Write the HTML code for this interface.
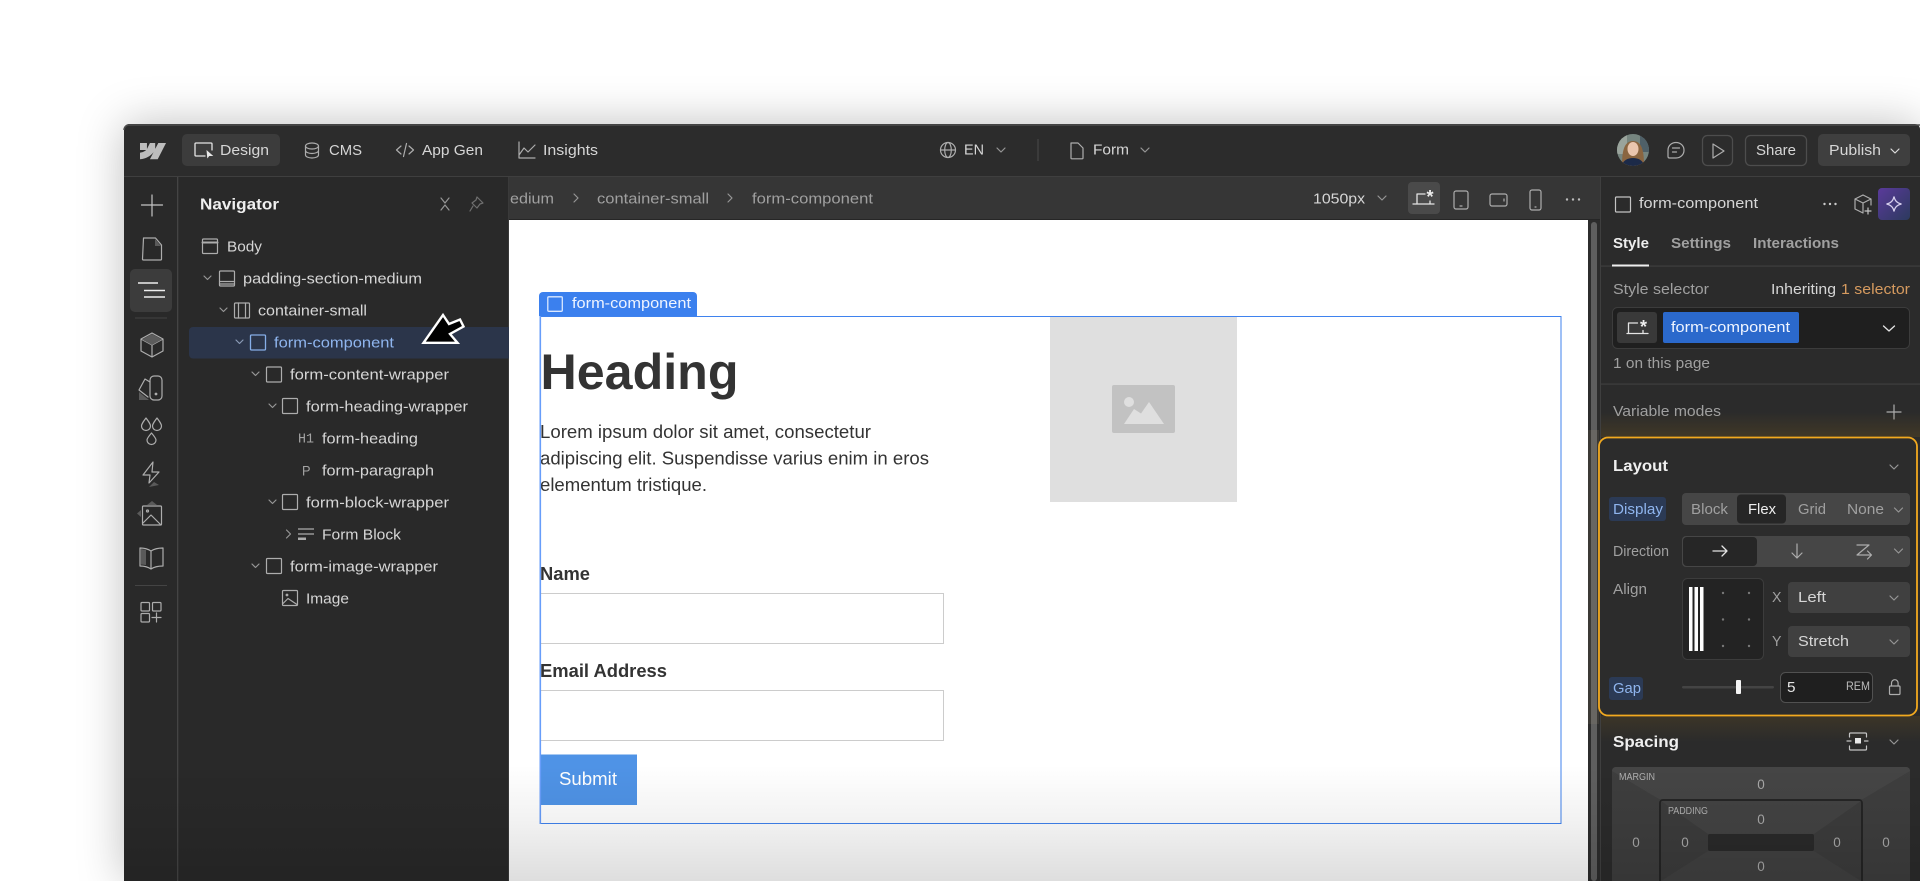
<!DOCTYPE html>
<html><head><meta charset="utf-8"><title>Navigator</title>
<style>
html,body{margin:0;padding:0;background:#fff;width:1920px;height:881px;overflow:hidden}
#wrap{position:relative;width:1920px;height:881px;overflow:hidden;background:#fff}
#sh{position:absolute;left:124px;top:124px;width:1796px;height:757px;border-radius:5px 0 0 0;box-shadow:0 0 46px rgba(0,0,0,.26)}
svg{position:absolute;left:0;top:0;display:block}
text{font-family:"Liberation Sans",sans-serif;font-size:15px;fill:#d6d6d6;transform:translateY(-.8px)}
.b{font-weight:700}
.g{fill:#a0a0a0}
.c{fill:#333;transform:none}
.n{transform:translateY(-.3px)}
.i{fill:none;stroke:#adadad;stroke-width:1.2;stroke-linejoin:round;stroke-linecap:round}
.w{fill:none;stroke:#e4e4e4;stroke-width:1.3;stroke-linecap:round;stroke-linejoin:round}
.ch{fill:none;stroke:#969696;stroke-width:1.2;stroke-linecap:round;stroke-linejoin:round}
.z{font-size:13.5px;fill:#a8a8a8;text-anchor:middle}
</style></head>
<body>
<div id="wrap">
<div id="sh"></div>
<svg width="1920" height="881" viewBox="0 0 1920 881" xmlns="http://www.w3.org/2000/svg">
<defs>
<linearGradient id="fade" x1="0" y1="0" x2="0" y2="1"><stop offset="0" stop-color="#000" stop-opacity="0"/><stop offset=".5" stop-color="#000" stop-opacity=".055"/><stop offset="1" stop-color="#000" stop-opacity=".13"/></linearGradient>
<linearGradient id="ai" x1="0" y1="0" x2="1" y2="1"><stop offset="0" stop-color="#5a3a9a"/><stop offset="1" stop-color="#2c3a5e"/></linearGradient>
<linearGradient id="glowbg" x1="0" y1="0" x2="0" y2="1"><stop offset="0" stop-color="#b07a10" stop-opacity="0"/><stop offset="1" stop-color="#b07a10" stop-opacity=".16"/></linearGradient>
<linearGradient id="glowbg2" x1="0" y1="0" x2="0" y2="1"><stop offset="0" stop-color="#b07a10" stop-opacity=".13"/><stop offset="1" stop-color="#b07a10" stop-opacity="0"/></linearGradient>
<clipPath id="av"><circle cx="1633" cy="150" r="16"/></clipPath>
</defs>

<!-- window -->
<rect x="124" y="124" width="1796" height="800" rx="5" fill="#2c2c2c"/>
<path d="M124 130a5 5 0 0 1 5-5H1920" fill="none" stroke="#4c4c4c" stroke-width="1.5"/>
<rect x="124" y="176" width="1796" height="1.5" fill="#3f3f3f"/>
<rect x="124" y="177" width="385" height="704" fill="#292929"/>
<rect x="177" y="177" width="1.3" height="704" fill="#444"/>
<rect x="508" y="177" width="1.2" height="704" fill="#3a3a3a"/>

<!-- top bar -->
<path transform="translate(140 143) scale(.0241)" fill="#bdbdbd" d="M1080 0 735.2 675H411.3l144.3-279.7h-6.5C430.1 550 252.4 651.5 0 675V399.2s161.5-9.5 256.4-109.4H0V.1h288.2v237h6.5L412.500.1h218v235.5h6.5L759.2 0H1080z"/>
<rect x="182" y="134" width="98" height="32" rx="5" fill="#3c3c3c"/>
<path class="w" d="M205 156h-9a1 1 0 0 1-1-1v-11a1 1 0 0 1 1-1h15a1 1 0 0 1 1 1v6"/><path d="M206.500 150l.8 8.500 2-2.500 4 0z" fill="#e8e8e8"/>
<text x="220" y="156" textLength="49" lengthAdjust="spacingAndGlyphs">Design</text>
<g class="i"><ellipse cx="312" cy="146" rx="6.500" ry="3"/><path d="M305.500 146v9c0 1.700 3 3 6.500 3s6.500-1.300 6.500-3v-9M305.500 150.500c0 1.700 3 3 6.500 3s6.500-1.300 6.500-3"/></g>
<text x="329" y="156" textLength="33" lengthAdjust="spacingAndGlyphs">CMS</text>
<g class="i"><path d="M401 146l-4.500 4 4.500 4M409 146l4.500 4-4.500 4M406.500 143.500l-3 13"/></g>
<text x="422" y="156" textLength="61" lengthAdjust="spacingAndGlyphs">App Gen</text>
<g class="i"><path d="M519 142v16h16M519 155l5-7 4 4 7-7"/></g>
<text x="543" y="156" textLength="55" lengthAdjust="spacingAndGlyphs">Insights</text>

<g class="i"><circle cx="948" cy="150" r="7.500"/><ellipse cx="948" cy="150" rx="3.300" ry="7.500"/><path d="M940.500 150h15"/></g>
<text x="964" y="155.500" textLength="20" lengthAdjust="spacingAndGlyphs">EN</text>
<path class="ch" d="M997 148l4 4 4-4"/>
<rect x="1037.500" y="139" width="1" height="22" fill="#4a4a4a"/>
<path class="i" d="M1071 143h7l5 5v10a.8.8 0 0 1-.8.800H1071.800a.8.8 0 0 1-.8-.8z"/>
<text x="1093" y="155.500" textLength="36" lengthAdjust="spacingAndGlyphs">Form</text>
<path class="ch" d="M1141 148l4 4 4-4"/>

<!-- breadcrumb bar -->
<rect x="509" y="177" width="1092" height="43" fill="#363636"/>
<rect x="509" y="219" width="1092" height="1" fill="#262626"/>
<text class="g n" x="510" y="204" textLength="44" lengthAdjust="spacingAndGlyphs">edium</text>
<path class="ch" d="M574 194l4 4-4 4"/>
<text class="g n" x="597" y="204" textLength="112" lengthAdjust="spacingAndGlyphs">container-small</text>
<path class="ch" d="M728 194l4 4-4 4"/>
<text class="g n" x="752" y="204" textLength="121" lengthAdjust="spacingAndGlyphs">form-component</text>
<text class="n" x="1313" y="204" textLength="52" lengthAdjust="spacingAndGlyphs">1050px</text>
<path class="ch" d="M1378 196l4 4 4-4"/>
<rect x="1408" y="182" width="32" height="32" rx="4" fill="#4a4a4a"/>
<path class="w" d="M1413 204h21M1417 203v-9h8M1430 204v-3"/><text x="1426.500" y="204" class="b" style="font-size:18px;fill:#eee">*</text>
<g class="i"><rect x="1454" y="191" width="14" height="18" rx="2"/><path d="M1460 206h2"/><rect x="1490" y="194" width="17" height="12" rx="2"/><path d="M1504 199v2"/><rect x="1530" y="190" width="11" height="20" rx="2"/><path d="M1535 207h1"/></g>
<circle cx="1567" cy="199.500" r="1.200" fill="#bbb"/><circle cx="1573" cy="199.500" r="1.200" fill="#bbb"/><circle cx="1579" cy="199.500" r="1.200" fill="#bbb"/>

<!-- canvas -->
<rect x="509" y="220" width="1079" height="661" fill="#fff"/>
<rect x="1588" y="220" width="13" height="661" fill="#2c2c2c"/>
<rect x="1591" y="222" width="6" height="659" rx="3" fill="#5f5f5f"/>
<rect x="1600" y="177" width="1.200" height="704" fill="#3f3f3f"/>

<rect x="1050" y="317" width="187" height="185" fill="#dfdfdf"/>
<rect x="1112" y="385" width="63" height="48" rx="2" fill="#c2c2c2"/>
<circle cx="1129" cy="402" r="5" fill="#dfdfdf"/>
<path d="M1124 424l10-15 7 4.500 8-11.500 15 22z" fill="#dfdfdf"/>

<text class="c b" x="540.500" y="389" textLength="198" lengthAdjust="spacingAndGlyphs" style="font-size:50.500px">Heading</text>
<text class="c" x="540" y="438" textLength="331" lengthAdjust="spacingAndGlyphs" style="font-size:18.600px">Lorem ipsum dolor sit amet, consectetur</text>
<text class="c" x="540" y="464.500" textLength="389" lengthAdjust="spacingAndGlyphs" style="font-size:18.600px">adipiscing elit. Suspendisse varius enim in eros</text>
<text class="c" x="540" y="491" textLength="167" lengthAdjust="spacingAndGlyphs" style="font-size:18.600px">elementum tristique.</text>
<text class="c b" x="540" y="580" textLength="50" lengthAdjust="spacingAndGlyphs" style="font-size:18.600px">Name</text>
<text class="c b" x="540" y="677" textLength="127" lengthAdjust="spacingAndGlyphs" style="font-size:18.600px">Email Address</text>
<rect x="540.500" y="593.500" width="403" height="50" fill="#fff" stroke="#ccc" stroke-width="1"/>
<rect x="540.500" y="690.500" width="403" height="50" fill="#fff" stroke="#ccc" stroke-width="1"/>
<rect x="540" y="754.500" width="97" height="50.500" fill="#4f93e6"/>
<text x="559" y="786" textLength="58" lengthAdjust="spacingAndGlyphs" style="font-size:18.600px;fill:#fff">Submit</text>

<!-- selection outline -->
<rect x="540" y="316.500" width="1021" height="507" fill="none" stroke="#3f82ee" stroke-width="1"/>
<rect x="539.500" y="316" width="1.600" height="508" fill="#679dfa"/>
<path d="M539 316v-20a4 4 0 0 1 4-4h150a4 4 0 0 1 4 4v20z" fill="#3b80ee"/>
<rect x="547.800" y="296.800" width="14.500" height="14.500" rx="1" fill="none" stroke="#dbe8ff" stroke-width="1.300"/>
<text x="572" y="309" textLength="119" lengthAdjust="spacingAndGlyphs" style="font-size:15px;fill:#eef4ff">form-component</text>

<!-- left rail -->
<path d="M152 195v21M141.500 205h21" class="i" style="stroke:#c4c4c4"/>
<path class="i" d="M143 238h12l6 7v14a1 1 0 0 1-1 1h-17a1 1 0 0 1-1-1z" transform="translate(.5 0)"/><path d="M155 239v7h6z" fill="#5a5a5a"/>
<rect x="130" y="269" width="42" height="43" rx="5" fill="#3c3c3c"/>
<path d="M138 283h20M144 290.500h21M144 297h21" stroke="#ededed" stroke-width="1.500"/>
<rect x="135" y="317.500" width="32" height="1" fill="#444"/>
<g class="i"><path d="M152 333l11 6v12l-11 6-11-6v-12zM141 339l11 6 11-6M152 345v12"/></g><path d="M152 334l10 5.500-10 5.500-10-5.500z" fill="#5c5c5c"/>
<!-- swatches -->
<g class="i"><rect x="150" y="376" width="12" height="24" rx="4"/><path d="M150 382l-5-3-6 11 9 7"/><circle cx="156" cy="394" r=".8" fill="#b4b4b4"/></g><path d="M139 400v-8l10 8z" fill="#5a5a5a"/>
<!-- drops -->
<g class="i"><path d="M146 418c-3 4-4.500 6-4.500 8a4.500 4.500 0 0 0 9 0c0-2-1.500-4-4.500-8zM157 418c-3 4-4.500 6-4.500 8a4.500 4.500 0 0 0 9 0c0-2-1.500-4-4.500-8zM151.500 433c-3 3.500-4.500 5.500-4.500 7a4.500 4.500 0 0 0 9 0c0-1.500-1.500-3.500-4.500-7z"/></g>
<!-- lightning -->
<g class="i"><path d="M153 462l-10 13h7l-1 8 10-11h-7z"/></g><path d="M149 487l5-5 5 3z" fill="#5a5a5a"/>
<!-- asset -->
<g class="i"><rect x="142.500" y="506" width="19" height="19" rx="1"/><circle cx="147.500" cy="511" r="1"/><path d="M143 523l8-8 10 10"/></g><path d="M147 505l5-4 5 4zM137 513.500l4-3.500v7z" fill="#5a5a5a"/>
<!-- book -->
<g class="i"><path d="M151 551c-3-2-7-3-11-3v18c4 0 8 1 11 3 3-2 8-3 12-3v-18c-4 0-9 1-12 3zM151 551v18"/></g><path d="M141 549l5 1v15l-5-.500z" fill="#5a5a5a"/>
<rect x="135" y="585" width="32" height="1" fill="#444"/>
<g class="i"><rect x="141" y="602.500" width="8.500" height="8.500" rx="1"/><rect x="152.500" y="602.500" width="8.500" height="8.500" rx="1"/><rect x="141" y="613.500" width="8.500" height="8.500" rx="1"/><path d="M156.500 613v9M152 617.500h9"/></g>

<!-- navigator -->
<text class="b n" x="200" y="210" textLength="79" lengthAdjust="spacingAndGlyphs" style="font-size:16px;fill:#efefef">Navigator</text>
<path class="ch" d="M441 198l4 5 4-5M441 210l4-5 4 5"/>
<path class="ch" style="stroke:#6f6f6f" d="M477 197l6 6-3 1-3 4-5-5 4-3zM473 206l-3 5"/>

<g class="i"><rect x="202.500" y="239" width="15" height="14.500" rx="1"/><path d="M202.500 242.500h15" stroke-width="2"/></g>
<text class="n" x="227" y="252" textLength="35" lengthAdjust="spacingAndGlyphs">Body</text>

<path class="ch" d="M204 276l3.500 3.500 3.500-3.500"/>
<g class="i"><rect x="219.500" y="271" width="15" height="15" rx="1"/><path d="M219.500 281.500h15M219.500 284h15"/></g>
<text class="n" x="243" y="284" textLength="179" lengthAdjust="spacingAndGlyphs">padding-section-medium</text>

<path class="ch" d="M220 308l3.500 3.500 3.500-3.500"/>
<g class="i"><rect x="234.500" y="303" width="15" height="15" rx="1"/><path d="M238.500 303v15M245.500 303v15"/></g>
<text class="n" x="258" y="316" textLength="109" lengthAdjust="spacingAndGlyphs">container-small</text>

<rect x="189" y="327" width="320" height="31.500" rx="4" fill="#2b354a"/>
<path d="M500 327h9v31.500h-9z" fill="#2b354a"/>
<path class="ch" d="M236 340l3.500 3.500 3.500-3.500" style="stroke:#8a9ab5"/>
<rect x="250.500" y="335" width="15" height="15" rx="1" fill="none" stroke="#86aee8" stroke-width="1.300"/>
<text class="n" x="274" y="348" textLength="120" lengthAdjust="spacingAndGlyphs" style="fill:#8fb5ee">form-component</text>

<!-- cursor -->
<path d="M423.500 342.800L443 315 449 324 460 319.500 463.500 326.500 450 334 457.500 342.800z" fill="#000" stroke="#fff" stroke-width="2.400" stroke-linejoin="miter"/>

<path class="ch" d="M252 372l3.500 3.500 3.500-3.500"/>
<rect x="266.500" y="367" width="15" height="15" rx="1" class="i"/>
<text class="n" x="290" y="380" textLength="159" lengthAdjust="spacingAndGlyphs">form-content-wrapper</text>

<path class="ch" d="M269 404l3.500 3.500 3.500-3.500"/>
<rect x="282.500" y="398.500" width="15" height="15" rx="1" class="i"/>
<text class="n" x="306" y="412" textLength="162" lengthAdjust="spacingAndGlyphs">form-heading-wrapper</text>

<text class="n" x="298" y="443" textLength="16" lengthAdjust="spacingAndGlyphs" style="font-family:'Liberation Mono',monospace;font-size:13.500px;fill:#a3a3a3">H1</text>
<text class="n" x="322" y="444" textLength="96" lengthAdjust="spacingAndGlyphs">form-heading</text>

<text class="n" x="302" y="476" textLength="8.500" lengthAdjust="spacingAndGlyphs" style="font-size:14px;fill:#a3a3a3">P</text>
<text class="n" x="322" y="476" textLength="112" lengthAdjust="spacingAndGlyphs">form-paragraph</text>

<path class="ch" d="M269 500l3.500 3.500 3.500-3.500"/>
<rect x="282.500" y="494.500" width="15" height="15" rx="1" class="i"/>
<text class="n" x="306" y="508" textLength="143" lengthAdjust="spacingAndGlyphs">form-block-wrapper</text>

<path class="ch" d="M286.500 530l4 4-4 4"/>
<path d="M298 529h16M298 534h16" stroke="#adadad" stroke-width="1.200"/><rect x="298" y="537.500" width="8" height="2.500" fill="#adadad"/>
<text class="n" x="322" y="540" textLength="79" lengthAdjust="spacingAndGlyphs">Form Block</text>

<path class="ch" d="M252 564l3.500 3.500 3.500-3.500"/>
<rect x="266.500" y="558.500" width="15" height="15" rx="1" class="i"/>
<text class="n" x="290" y="572" textLength="148" lengthAdjust="spacingAndGlyphs">form-image-wrapper</text>

<g class="i"><rect x="282.500" y="590.500" width="15" height="15" rx="1"/><circle cx="287" cy="595" r=".8"/><path d="M283 603.500l5-5 9 6"/></g>
<text class="n" x="306" y="604" textLength="43" lengthAdjust="spacingAndGlyphs">Image</text>

<!-- top right -->
<g clip-path="url(#av)">
<rect x="1617" y="134" width="32" height="33" fill="#76857f"/>
<rect x="1617" y="134" width="10" height="20" fill="#9aa49c"/>
<rect x="1640" y="134" width="9" height="18" fill="#4f6068"/>
<path d="M1622 166c0-12 1-25 11-25s11 13 11 25z" fill="#8a6540"/>
<ellipse cx="1633" cy="149" rx="5.500" ry="7" fill="#eac6ae"/>
<path d="M1621 168c1-7 6-10 12-10s11 3 12 10z" fill="#1c2a48"/>
</g>
<path class="i" d="M1676 142.500c4.600 0 8 3.400 8 7.700s-3.400 7.800-8 7.800h-6.500c-1 0-1.500-.6-1.500-1.500v-6.300c0-4.300 3.400-7.700 8-7.700zM1672.500 148h7M1672.500 152h4"/>
<rect x="1702.500" y="135.500" width="30" height="30" rx="5" fill="none" stroke="#4d4d4d" stroke-width="1.300"/>
<path class="i" d="M1713 144v14l11-7z"/>
<rect x="1745.500" y="135.500" width="61" height="30" rx="5" fill="none" stroke="#4d4d4d" stroke-width="1.300"/>
<text x="1756" y="156" textLength="40" lengthAdjust="spacingAndGlyphs">Share</text>
<rect x="1818" y="134" width="92" height="32" rx="5" fill="#3f3f3f"/>
<text x="1829" y="156" textLength="52" lengthAdjust="spacingAndGlyphs">Publish</text>
<path class="ch" d="M1891 149l4 4 4-4" style="stroke:#ddd"/>

<!-- right panel -->
<rect x="1601" y="177" width="319" height="704" fill="#2b2b2b"/>
<rect x="1615.500" y="197" width="15" height="15" rx="1" class="i" style="stroke:#c4c4c4"/>
<text x="1639" y="209" textLength="119" lengthAdjust="spacingAndGlyphs">form-component</text>
<circle cx="1824.500" cy="204" r="1.200" fill="#ccc"/><circle cx="1830" cy="204" r="1.200" fill="#ccc"/><circle cx="1835.500" cy="204" r="1.200" fill="#ccc"/>
<g class="i"><path d="M1863 195l8 4v6M1863 195l-8 4v10l8 4M1855 199l8 4v10M1863 203l8-4"/><path d="M1868 208v6M1865 211h6" style="stroke:#c4c4c4"/></g>
<rect x="1878" y="188" width="32" height="32" rx="4" fill="url(#ai)"/>
<path d="M1894 196.500c.8 4.500 3 6.700 7.500 7.500-4.500.8-6.700 3-7.500 7.500-.8-4.500-3-6.700-7.500-7.500 4.500-.8 6.700-3 7.500-7.500z" fill="none" stroke="#d7d0ee" stroke-width="1.200"/>

<text class="b" x="1613" y="249" textLength="36" lengthAdjust="spacingAndGlyphs" style="fill:#eee">Style</text>
<text class="b" x="1671" y="249" textLength="60" lengthAdjust="spacingAndGlyphs" style="fill:#a0a0a0">Settings</text>
<text class="b" x="1753" y="249" textLength="86" lengthAdjust="spacingAndGlyphs" style="fill:#a0a0a0">Interactions</text>
<rect x="1601" y="265.500" width="319" height="1.200" fill="#3f3f3f"/>
<rect x="1612" y="264.500" width="37" height="2" fill="#eee"/>

<text class="g" x="1613" y="295" textLength="96" lengthAdjust="spacingAndGlyphs">Style selector</text>
<text x="1771" y="295" textLength="65" lengthAdjust="spacingAndGlyphs">Inheriting</text>
<text x="1841" y="295" textLength="69" lengthAdjust="spacingAndGlyphs" style="fill:#d59a5f">1 selector</text>
<rect x="1612.500" y="307.500" width="297" height="41" rx="5" fill="#1f1f1f" stroke="#3c3c3c"/>
<rect x="1617" y="312" width="40" height="31" rx="3" fill="#393939"/>
<path class="w" d="M1627 333.500h21M1628.500 333v-10h9M1643 333.500v-3"/><text x="1640" y="334" class="b" style="font-size:18px;fill:#eee">*</text>
<rect x="1663" y="312" width="136" height="31" rx="2" fill="#2b69cc"/>
<text x="1671" y="333" textLength="119" lengthAdjust="spacingAndGlyphs" style="fill:#f0f5ff">form-component</text>
<path class="w" d="M1883.500 326l5.500 5 5.500-5"/>
<text class="g" x="1613" y="369" textLength="97" lengthAdjust="spacingAndGlyphs">1 on this page</text>
<rect x="1601" y="383.500" width="319" height="1.200" fill="#3f3f3f"/>
<text class="g" x="1613" y="417" textLength="108" lengthAdjust="spacingAndGlyphs">Variable modes</text>
<path class="i" d="M1894 405v14M1887 412h14"/>

<!-- glow + layout box -->
<rect x="1601" y="412" width="319" height="25" fill="url(#glowbg)"/>
<rect x="1601" y="716" width="319" height="26" fill="url(#glowbg2)"/>
<rect x="1588" y="430" width="11" height="294" fill="#b0a078" opacity=".12"/>
<rect x="1599" y="437.500" width="318" height="278" rx="9" fill="#2c2c2c" stroke="#f2a91f" stroke-width="1.800"/>
<text class="b" x="1613" y="472" textLength="55" lengthAdjust="spacingAndGlyphs" style="font-size:16px;fill:#efefef">Layout</text>
<path class="ch" d="M1890 465l4 4 4-4"/>

<rect x="1609" y="497" width="57" height="24" rx="3" fill="#2b3a55"/>
<text x="1613" y="515" textLength="50" lengthAdjust="spacingAndGlyphs" style="fill:#8fb5ee">Display</text>
<rect x="1682" y="493" width="228" height="32" rx="4" fill="#464646"/>
<rect x="1737" y="494.500" width="49" height="29" rx="4" fill="#262626"/>
<text class="g" x="1691" y="515" textLength="37" lengthAdjust="spacingAndGlyphs">Block</text>
<text x="1748" y="515" textLength="28" lengthAdjust="spacingAndGlyphs" style="fill:#eee">Flex</text>
<text class="g" x="1798" y="515" textLength="28" lengthAdjust="spacingAndGlyphs">Grid</text>
<text class="g" x="1847" y="515" textLength="37" lengthAdjust="spacingAndGlyphs">None</text>
<path class="ch" d="M1894.500 508l4 4 4-4"/>

<text class="g" x="1613" y="557" textLength="56" lengthAdjust="spacingAndGlyphs">Direction</text>
<rect x="1682" y="536" width="228" height="31" rx="4" fill="#464646"/>
<rect x="1683" y="537" width="74" height="29" rx="4" fill="#262626"/>
<path class="w" d="M1713 551h14M1722 546l5 5-5 5"/>
<path class="i" d="M1797 544v14M1792 553l5 5 5-5"/>
<path class="i" d="M1857 545h12l-12 10h14M1867.500 551l4 4-4 4"/>
<path class="ch" d="M1894.500 549l4 4 4-4"/>

<text class="g" x="1613" y="595" textLength="34" lengthAdjust="spacingAndGlyphs">Align</text>
<rect x="1682.500" y="578.500" width="81" height="81" rx="5" fill="#232323" stroke="#3c3c3c"/>
<rect x="1689" y="587" width="3.500" height="64" fill="#fff"/><rect x="1694.500" y="587" width="3.500" height="64" fill="#fff"/><rect x="1700" y="587" width="3.500" height="64" fill="#fff"/>
<g fill="#777"><circle cx="1723" cy="593" r="1.200"/><circle cx="1749" cy="593" r="1.200"/><circle cx="1723" cy="619.500" r="1.200"/><circle cx="1749" cy="619.500" r="1.200"/><circle cx="1723" cy="646" r="1.200"/><circle cx="1749" cy="646" r="1.200"/></g>
<text class="g" x="1772" y="603" textLength="9.500" lengthAdjust="spacingAndGlyphs">X</text>
<rect x="1788" y="582" width="122" height="31" rx="4" fill="#404040"/>
<text x="1798" y="603" textLength="28" lengthAdjust="spacingAndGlyphs">Left</text>
<path class="ch" d="M1890 596l4 4 4-4"/>
<text class="g" x="1772" y="647" textLength="9.500" lengthAdjust="spacingAndGlyphs">Y</text>
<rect x="1788" y="626" width="122" height="31" rx="4" fill="#404040"/>
<text x="1798" y="647" textLength="51" lengthAdjust="spacingAndGlyphs">Stretch</text>
<path class="ch" d="M1890 640l4 4 4-4"/>

<rect x="1609" y="677" width="34" height="23" rx="3" fill="#2b3a55"/>
<text x="1613" y="694" textLength="28" lengthAdjust="spacingAndGlyphs" style="fill:#8fb5ee">Gap</text>
<rect x="1682" y="686" width="92" height="2.500" rx="1.200" fill="#444"/>
<rect x="1736" y="680" width="5" height="14" rx="1" fill="#f5f5f5"/>
<rect x="1780.500" y="672.500" width="92" height="30" rx="5" fill="#1f1f1f" stroke="#515151"/>
<text x="1787" y="693" textLength="8.500" lengthAdjust="spacingAndGlyphs" style="fill:#e4e4e4">5</text>
<text x="1846" y="691" textLength="24" lengthAdjust="spacingAndGlyphs" style="font-size:11.500px;fill:#bbb">REM</text>
<g class="i"><rect x="1889.500" y="686" width="10.500" height="8.500" rx="1"/><path d="M1891.500 686v-3a3.300 3.300 0 0 1 6.600 0v3"/></g>

<!-- spacing -->
<text class="b" x="1613" y="748" textLength="66" lengthAdjust="spacingAndGlyphs" style="font-size:16px;fill:#efefef">Spacing</text>
<g class="i" style="stroke:#c4c4c4"><path d="M1849.500 737v-3a1 1 0 0 1 1-1h15a1 1 0 0 1 1 1v3M1849.500 746v3a1 1 0 0 0 1 1h15a1 1 0 0 0 1-1v-3M1847 741h4M1864.500 741h3.500"/></g><rect x="1855" y="738" width="6" height="5.500" fill="#e8e8e8"/>
<path class="ch" d="M1890 740l4 4 4-4"/>

<path d="M1616 767h290a4 4 0 0 1 4 4v110h-298v-110a4 4 0 0 1 4-4z" fill="#3e3e3e"/>
<path d="M1612 771a4 4 0 0 1 4-4h290a4 4 0 0 1 4 4l-47 28h-204z" fill="#454545"/>
<rect x="1660" y="800" width="202" height="90" rx="3" fill="#3c3c3c" stroke="#222" stroke-width="1.800"/>
<path d="M1661 801h200l-47 33h-106z" fill="#434343"/>
<path d="M1661 881l47-30h106l47 30z" fill="#414141"/>
<rect x="1708" y="834" width="106" height="17" rx="2" fill="#2a2a2a"/>
<text x="1619" y="781" textLength="36" lengthAdjust="spacingAndGlyphs" style="font-size:10px;fill:#b0b0b0">MARGIN</text>
<text x="1668" y="815" textLength="40" lengthAdjust="spacingAndGlyphs" style="font-size:10px;fill:#b0b0b0">PADDING</text>
<text class="z" x="1761" y="790">0</text>
<text class="z" x="1761" y="825">0</text>
<text class="z" x="1636" y="848">0</text>
<text class="z" x="1685" y="848">0</text>
<text class="z" x="1837" y="848">0</text>
<text class="z" x="1886" y="848">0</text>
<text class="z" x="1761" y="872">0</text>

<!-- bottom fade -->
<rect x="124" y="765" width="1796" height="116" fill="url(#fade)"/>
</svg>
</div>
</body></html>
